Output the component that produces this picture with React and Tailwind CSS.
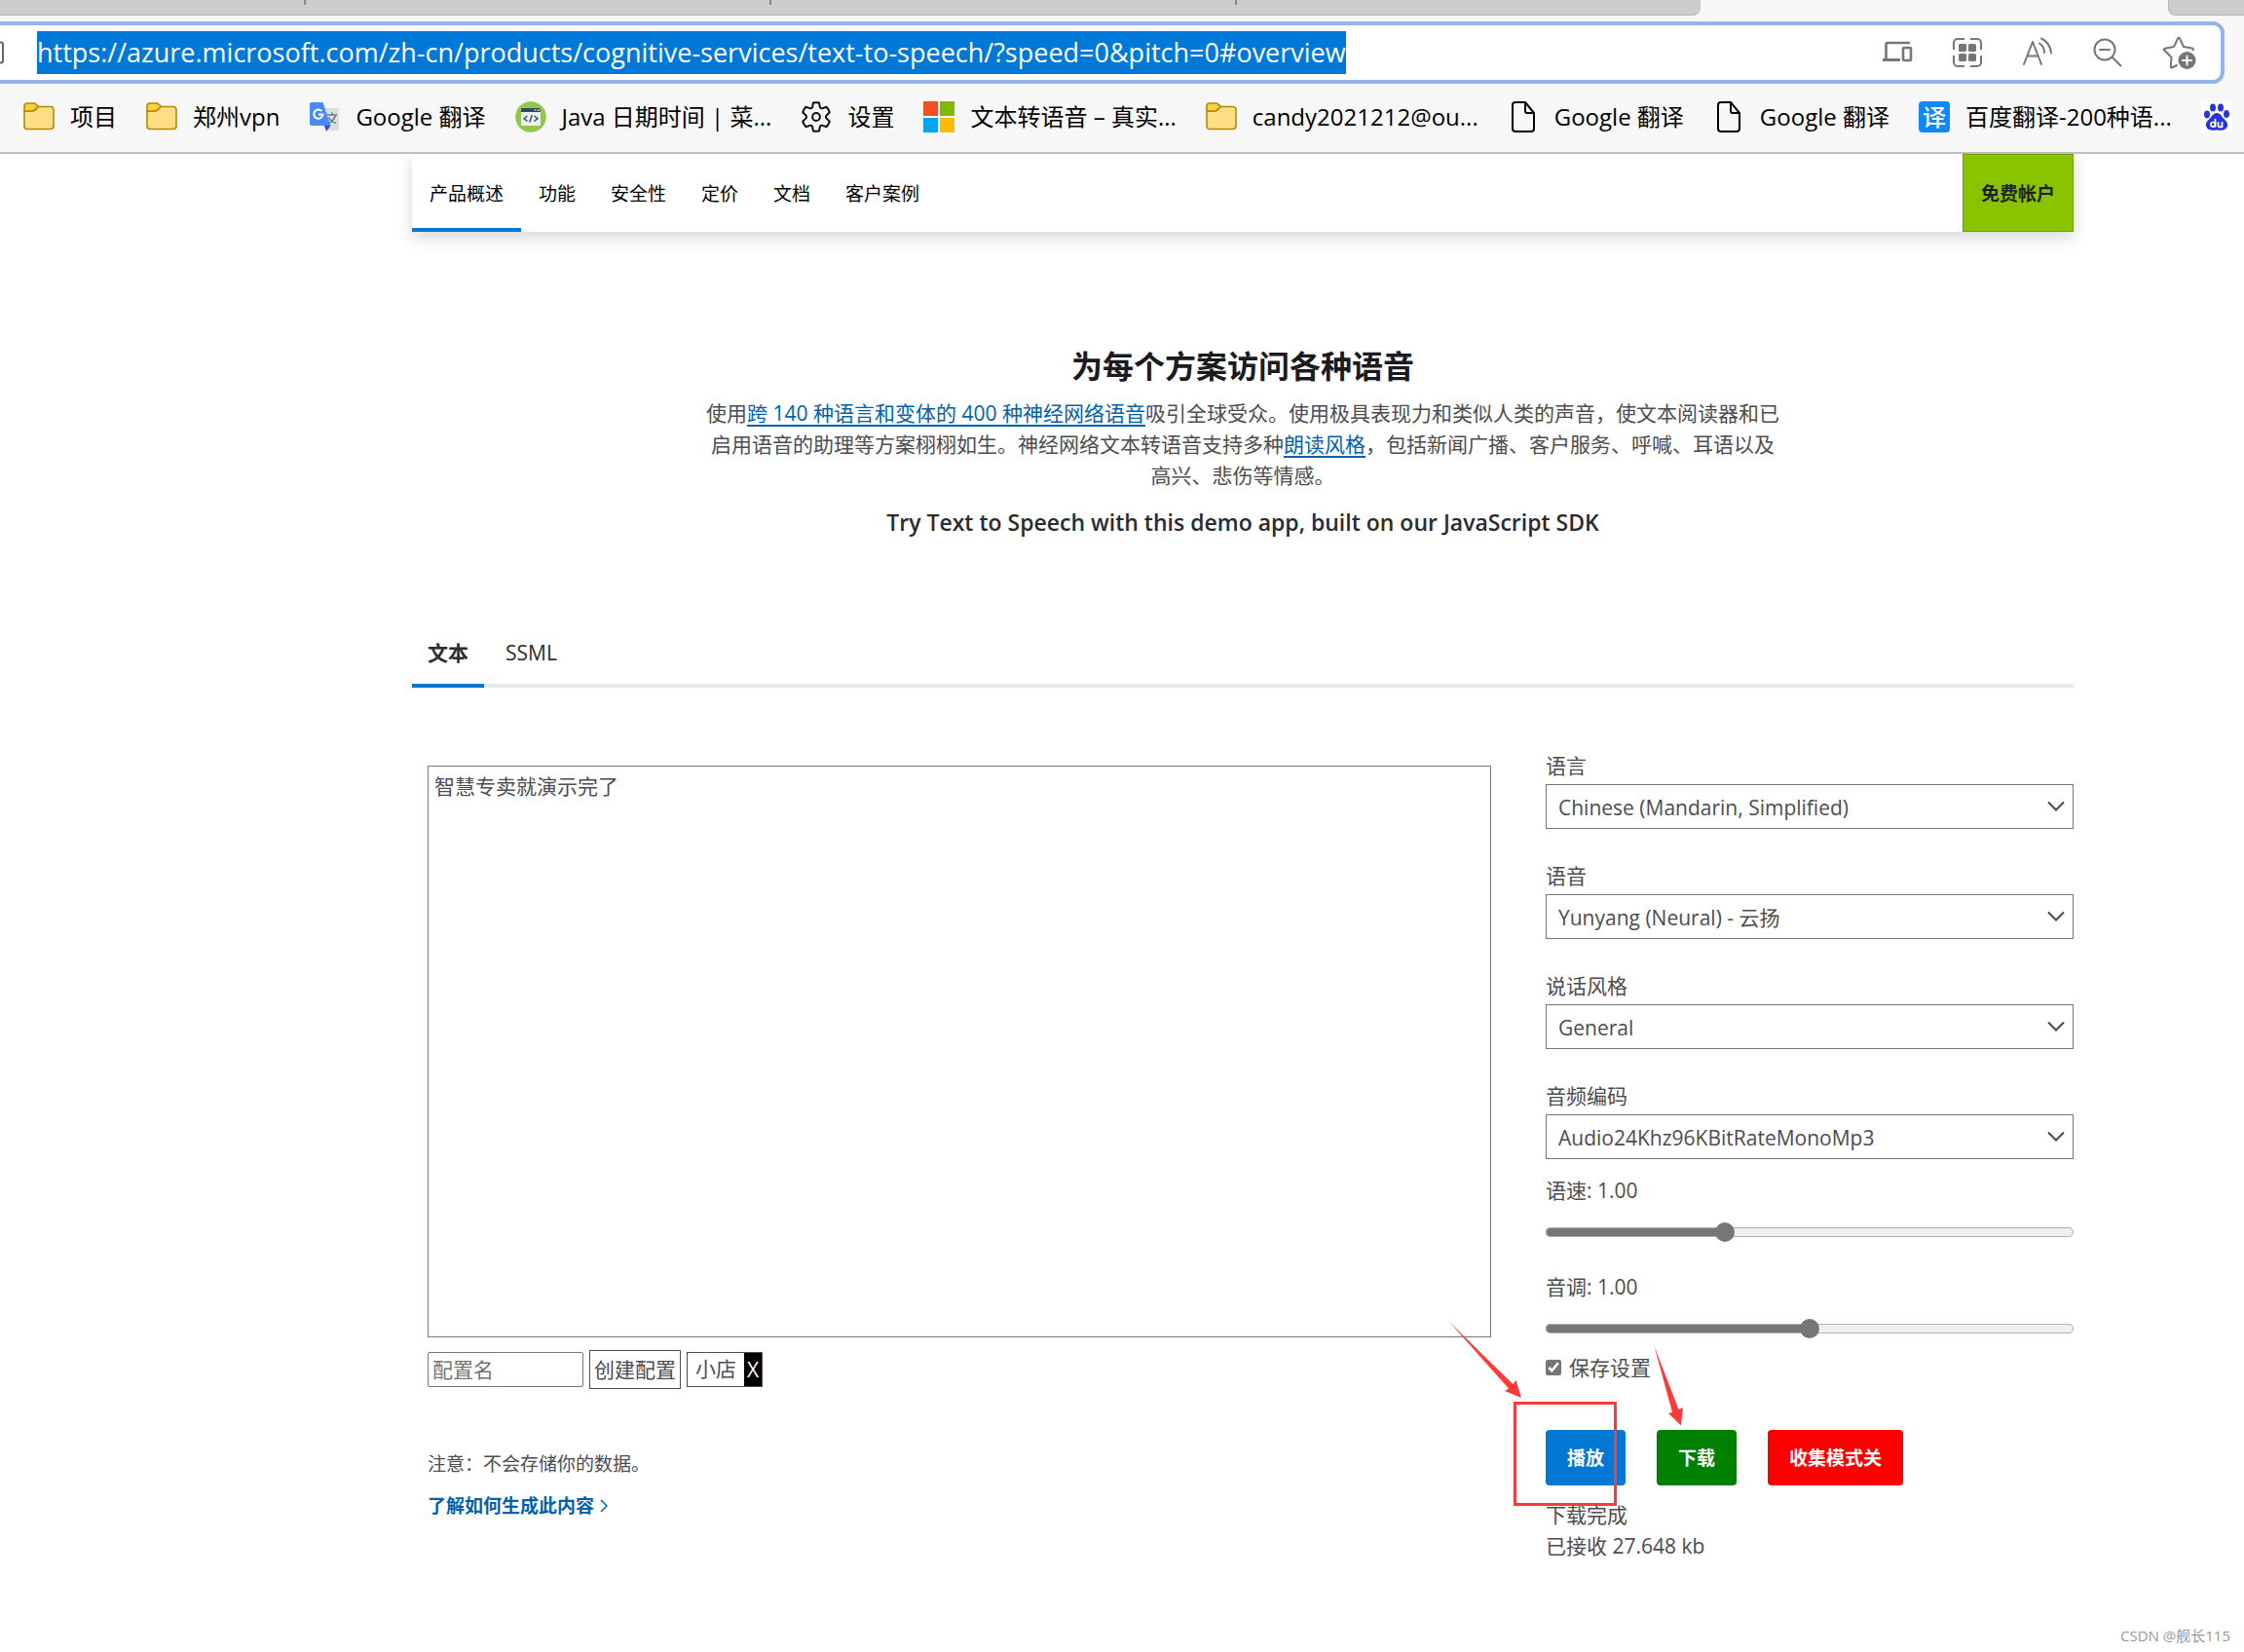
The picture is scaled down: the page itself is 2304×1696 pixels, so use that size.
import React, { useState } from "react";

const FONT = "font-['Open_Sans','Noto_Sans_CJK_SC',sans-serif]";

function FolderIcon() {
  return (
    <svg viewBox="0 0 32 32" className="size-8 shrink-0" stroke="#b58900" strokeWidth="1.6">
      <path d="M1 10V25.500a3 3 0 0 0 3 3h24a3 3 0 0 0 3-3V8.500a3 3 0 0 0-3-3H15L12 9 9 10z" fill="#ffdf85" />
      <path d="M1 10V5a3 3 0 0 1 3-3h7.500l3.800 3.200L12 8.500 10 10z" fill="#ffcf3d" />
    </svg>
  );
}

function TranslateIcon() {
  return (
    <svg viewBox="0 0 32 32" className="size-8 shrink-0">
      <path d="M12 7h17a2 2 0 0 1 2 2v19a2 2 0 0 1-2 2H18z" fill="#dedede" />
      <path d="M19 14h10M24 11.500v2.500M27.500 14c-1 4-4 7-6.500 8.500M20.500 16.500c1.500 3 4.500 5 7.500 6" fill="none" stroke="#607d8b" strokeWidth="1.500" />
      <path d="M16 25h6.500L18 31z" fill="#3a4cbf" />
      <path d="M3 1h11.500L22.500 25H3a2 2 0 0 1-2-2V3a2 2 0 0 1 2-2z" fill="#4a8af4" />
      <path d="M13.300 10.200A4.600 4.600 0 1 0 14.400 13.500H10" fill="none" stroke="#fff" strokeWidth="2" />
    </svg>
  );
}

function CodeIcon() {
  return (
    <svg viewBox="0 0 32 32" className="size-8 shrink-0">
      <circle cx="16" cy="16" r="15.800" fill="#91c84c" />
      <rect x="6" y="7" width="20" height="18" rx="1" fill="#ecf0f1" />
      <path d="M6 11V8a1 1 0 0 1 1-1h18a1 1 0 0 1 1 1v3z" fill="#324a5e" />
      <circle cx="20.500" cy="9" r="1" fill="#4cdbc4" />
      <circle cx="22.500" cy="9" r="1" fill="#f1543f" />
      <circle cx="24.500" cy="9" r="1" fill="#ffd05b" />
      <path d="M12.500 15l-3.500 2.700 3.500 2.700M19.500 15l3.500 2.700-3.500 2.700M17.300 14l-2.600 7.500" fill="none" stroke="#324a5e" strokeWidth="1.400" />
    </svg>
  );
}

function GearIcon() {
  return (
    <svg viewBox="0 0 32 32" className="size-8 shrink-0" fill="none" stroke="#111" strokeWidth="2" strokeLinejoin="round">
      <path d="M13 1.500a15 15 0 0 1 6 0l.800 4a2 2 0 0 0 2.900 1.600l3.800-1.400a15 15 0 0 1 3.300 5.600l-3 2.900a2.200 2.200 0 0 0 0 3.500l3 2.900a15 15 0 0 1-3.300 5.700l-3.800-1.400a2 2 0 0 0-2.900 1.600l-.800 4a15 15 0 0 1-6 0l-.800-4a2 2 0 0 0-2.900-1.600l-3.800 1.400a15 15 0 0 1-3.300-5.700l3-2.900a2.200 2.200 0 0 0 0-3.500l-3-2.900a15 15 0 0 1 3.300-5.600l3.800 1.400a2 2 0 0 0 2.900-1.600z" />
      <circle cx="16" cy="16" r="3.900" />
    </svg>
  );
}

function MicrosoftIcon() {
  return (
    <svg viewBox="0 0 32 32" className="size-8 shrink-0">
      <path d="M0 0h15v15H0z" fill="#f25022" />
      <path d="M17 0h15v15H17z" fill="#7fba00" />
      <path d="M0 17h15v15H0z" fill="#00a4ef" />
      <path d="M17 17h15v15H17z" fill="#ffb900" />
    </svg>
  );
}

function PageIcon() {
  return (
    <svg viewBox="0 0 32 32" className="size-8 shrink-0" fill="none" stroke="#000" strokeWidth="2" strokeLinejoin="round">
      <path d="M8 1h10l9 11v16a3 3 0 0 1-3 3H8a3 3 0 0 1-3-3V4a3 3 0 0 1 3-3z" />
      <path d="M18 1v9a2 2 0 0 0 2 2h7" />
    </svg>
  );
}

function YiIcon() {
  return (
    <span aria-hidden="true" className="flex size-8 shrink-0 items-center justify-center rounded bg-[#1088f8] text-[24px] leading-none font-medium text-white">
      译
    </span>
  );
}

function BaiduIcon() {
  return (
    <svg viewBox="0 0 32 32" className="size-8 shrink-0">
      <rect width="32" height="32" rx="4" fill="#fff" />
      <g fill="#2932e1">
        <ellipse cx="12" cy="6.500" rx="3" ry="4" />
        <ellipse cx="20" cy="6.500" rx="3" ry="4" />
        <ellipse cx="6" cy="13.500" rx="3" ry="3.900" />
        <ellipse cx="26" cy="13" rx="3" ry="3.900" />
        <path d="M16 12c4 0 5 4 8 6.500 2.500 2.500 4 5 2.500 8-1.500 3.500-5 3.500-10.500 3-5.500.500-9 .500-10.500-3-1.500-3 0-5.500 2.500-8C11 16 12 12 16 12z" />
      </g>
      <path d="M14.500 18v8.500M21.500 21v3.500a2 2 0 0 1-4 0V21M21.500 21v6" fill="none" stroke="#fff" strokeWidth="1.700" />
      <circle cx="12.200" cy="23.800" r="2.300" fill="none" stroke="#fff" strokeWidth="1.700" />
    </svg>
  );
}

const bookmarks = [
  { icon: FolderIcon, label: "项目" },
  { icon: FolderIcon, label: "郑州vpn" },
  { icon: TranslateIcon, label: "Google 翻译" },
  { icon: CodeIcon, label: "Java 日期时间 | 菜..." },
  { icon: GearIcon, label: "设置" },
  { icon: MicrosoftIcon, label: "文本转语音 – 真实..." },
  { icon: FolderIcon, label: "candy2021212@ou..." },
  { icon: PageIcon, label: "Google 翻译" },
  { icon: PageIcon, label: "Google 翻译" },
  { icon: YiIcon, label: "百度翻译-200种语..." },
  { icon: BaiduIcon, label: "" },
];

function AddressIcons() {
  return (
    <div className="flex items-center gap-10 text-[#767676]">
      <button aria-label="发送到设备">
        <svg viewBox="0 0 32 32" className="size-8" fill="none" stroke="currentColor" strokeWidth="2">
          <path d="M4.500 22.500V7.500a1.500 1.500 0 0 1 1.500-1.500h23" strokeWidth="2.600" />
          <path d="M1 23.500h18" strokeWidth="3" />
          <rect x="22" y="11" width="8" height="13" rx="1" strokeWidth="2.600" />
        </svg>
      </button>
      <button aria-label="应用">
        <svg viewBox="0 0 32 32" className="size-8" fill="none" stroke="currentColor" strokeWidth="2">
          <path d="M2 13V6a4 4 0 0 1 4-4h7M19 2h7a4 4 0 0 1 4 4v7M30 19v7a4 4 0 0 1-4 4h-7M13 30H6a4 4 0 0 1-4-4v-7" />
          <g fill="currentColor" stroke="none">
            <rect x="7" y="7" width="8" height="8" rx="1.500" />
            <rect x="17" y="7" width="8" height="8" rx="1.500" />
            <rect x="7" y="17" width="8" height="8" rx="1.500" />
            <rect x="17" y="17" width="8" height="8" rx="1.500" />
          </g>
        </svg>
      </button>
      <button aria-label="大声朗读">
        <svg viewBox="0 0 32 32" className="size-8" fill="none" stroke="currentColor" strokeWidth="2" strokeLinecap="round" strokeLinejoin="round">
          <path d="M2 28L11 5l9 23M5.500 19.500h11" />
          <path d="M18 6.500c3 2 5 5.500 5 9.500M20 1.500c6 3 9.500 8.500 10 15" />
        </svg>
      </button>
      <button aria-label="缩小">
        <svg viewBox="0 0 32 32" className="size-8" fill="none" stroke="currentColor" strokeWidth="2" strokeLinecap="round">
          <circle cx="13" cy="13" r="10.500" />
          <path d="M8 13h10M20.500 20.500L29.500 29.500" />
        </svg>
      </button>
      <button aria-label="添加到收藏夹">
        <svg viewBox="0 0 36 36" className="size-9" fill="none" stroke="currentColor" strokeWidth="2" strokeLinejoin="round" strokeLinecap="round">
          <path d="M15 31l-5 2.500c-.800.200-1.300-.300-1.200-1L9.500 23 2 15.300c-.500-.700-.200-1.500.700-1.600L12 12l4.200-8.700c.400-.700 1.300-.700 1.700 0L22 12l9 1.500c1 .200 1.200 1 .500 1.700" />
          <circle cx="25.500" cy="26" r="9" fill="currentColor" stroke="none" />
          <path d="M25.500 21.500v9M21 26h9" stroke="#fff" />
        </svg>
      </button>
    </div>
  );
}

function BrowserChrome() {
  return (
    <header className="border-b-2 border-[#bfbfbf] bg-[#f7f7f7]">
      <div className="flex h-4 justify-between">
        <div className="flex w-[1746px] rounded-br-lg border-b border-[#b5b5b5] bg-[#cdcdcd]">
          <span className="h-[5px] w-[314px] border-r-2 border-[#8a8a8a]" />
          <span className="h-[5px] w-[478px] border-r-2 border-[#8a8a8a]" />
          <span className="h-[5px] w-[478px] border-r-2 border-[#8a8a8a]" />
        </div>
        <div className="w-[78px] rounded-bl-lg border-b border-l border-[#b5b5b5] bg-[#cdcdcd]" />
      </div>
      <div className="mt-1.5 mr-5 flex h-16 items-center justify-between rounded-r-xl border-4 border-l-0 border-[#92b4ea] bg-white pr-6">
        <div className="flex items-center">
          <svg viewBox="0 0 4 24" className="mr-[34px] h-6 w-1" fill="none" stroke="#666" strokeWidth="2">
            <path d="M0 1.500h1a2 2 0 0 1 2 2v17a2 2 0 0 1-2 2H0" />
          </svg>
          <input
            aria-label="地址"
            readOnly
            value="https://azure.microsoft.com/zh-cn/products/cognitive-services/text-to-speech/?speed=0&pitch=0#overview"
            className="h-11 field-sizing-content bg-[#0078d7] pb-0.5 text-[27px] text-white outline-none"
          />
        </div>
        <AddressIcons />
      </div>
      <nav aria-label="收藏夹" className="flex h-[70px] items-center gap-[30px] overflow-hidden pb-0.5 pl-6 text-[24px] leading-8 whitespace-nowrap text-black">
        {bookmarks.map(({ icon: Icon, label }, i) => (
          <a key={i} href="#bookmark" aria-label={label || "百度"} className="flex items-center gap-4">
            <Icon />
            {label && <span>{label}</span>}
          </a>
        ))}
      </nav>
    </header>
  );
}

function ProductNav() {
  const items = ["产品概述", "功能", "安全性", "定价", "文档", "客户案例"];
  return (
    <nav aria-label="产品" className="flex h-20 justify-between bg-white shadow-[0_6px_16px_rgba(0,0,0,0.16)] [clip-path:inset(0_-24px_-28px_-24px)]">
      <div className="flex">
        {items.map((t, i) => (
          <a
            key={t}
            href="#overview"
            className={
              "flex items-center border-y-4 border-t-transparent px-[18px] pt-0.5 text-[19px] text-black " +
              (i === 0 ? "border-b-[#0078d4]" : "border-b-transparent")
            }
          >
            {t}
          </a>
        ))}
      </div>
      <a href="#free" className="flex items-center border border-[#6fa000] bg-[#8ac400] px-[18px] pt-0.5 text-[19px] font-bold text-[#1f1f23]">
        免费帐户
      </a>
    </nav>
  );
}

function SelectField({ id, label, value }) {
  return (
    <div>
      <label htmlFor={id} className="block pb-[3px]">{label}</label>
      <div className="relative">
        <select id={id} className="block h-[46px] w-full appearance-none rounded-none border border-[#75757a] bg-white pt-0.5 pl-3 outline-none">
          <option>{value}</option>
        </select>
        <svg viewBox="0 0 18 12" className="pointer-events-none absolute top-[17px] right-[9px] h-3 w-[18px]" fill="none" stroke="#4a4a4e" strokeWidth="2">
          <path d="M1 1.500l8 8 8-8" />
        </svg>
      </div>
    </div>
  );
}

function SliderField({ id, label, max, initial }) {
  const [value, setValue] = useState(initial);
  const pct = (value / max) * 100;
  return (
    <div>
      <label htmlFor={id} className="block">{label}: 1.00</label>
      <input
        id={id}
        type="range"
        min="0"
        max={max}
        step="any"
        value={value}
        onChange={(e) => setValue(Number(e.target.value))}
        style={{ "--fill": `linear-gradient(to right, #767676 ${pct}%, #efefef ${pct}%)` }}
        className="mt-[17px] block h-5 w-full appearance-none bg-transparent [&::-webkit-slider-runnable-track]:h-2.5 [&::-webkit-slider-runnable-track]:rounded-full [&::-webkit-slider-runnable-track]:bg-(image:--fill) [&::-webkit-slider-runnable-track]:shadow-[inset_0_0_0_1px_#b2b2b2] [&::-webkit-slider-thumb]:-mt-[5px] [&::-webkit-slider-thumb]:size-5 [&::-webkit-slider-thumb]:appearance-none [&::-webkit-slider-thumb]:rounded-full [&::-webkit-slider-thumb]:bg-[#767676]"
      />
    </div>
  );
}

function ActionButtons() {
  const base = "h-[57px] rounded px-[22px] text-[19px] font-bold text-white ";
  return (
    <div className="relative mt-12 flex gap-8">
      <button className={base + "bg-[#0078d4]"}>播放</button>
      <button className={base + "bg-[#008000]"}>下载</button>
      <button className={base + "bg-[#ff0000]"}>收集模式关</button>
      <svg viewBox="0 0 260 200" className="pointer-events-none absolute -top-[118px] -left-[107px] h-[200px] w-[260px]" fill="#fb3b3a">
        <path d="M8 7L73.500 71l3-4L82 85l-17-7 4-2.500z" />
        <path d="M218.500 32l25 65 4.500-2-2 18.500L233 101l4-1z" />
        <path d="M75.500 90.500h103v104h-103z" fill="none" stroke="#fb3b3a" strokeWidth="3" />
      </svg>
    </div>
  );
}

export default function App() {
  return (
    <div className={"min-h-screen bg-white text-[21px] leading-8 text-[#4c4c51] " + FONT}>
      <BrowserChrome />
      <main className="pr-[175px] pl-[423px]">
        <ProductNav />

        <section className="mx-auto mt-[114px] w-[1120px] text-center">
          <h2 className="text-[32px] leading-12 font-bold text-[#1b1b1f]">为每个方案访问各种语音</h2>
          <p className="mt-2">
            使用
            <a href="#voices" className="text-[#0062ad] underline underline-offset-4">跨 140 种语言和变体的 400 种神经网络语音</a>
            吸引全球受众。使用极具表现力和类似人类的声音，使文本阅读器和已
            <br />
            启用语音的助理等方案栩栩如生。神经网络文本转语音支持多种
            <a href="#styles" className="text-[#0062ad] underline underline-offset-4">朗读风格</a>
            ，包括新闻广播、客户服务、呼喊、耳语以及
            <br />
            高兴、悲伤等情感。
          </p>
          <h3 className="mt-4 text-[23px] font-semibold text-[#2b2b30]">
            Try Text to Speech with this demo app, built on our JavaScript SDK
          </h3>
        </section>

        <div role="tablist" className="mt-[78px] flex h-[76px] border-b-4 border-[#e8e9ea] text-[#2b2b30]">
          <button role="tab" aria-selected="true" className="-mb-1 border-b-4 border-[#0078d4] px-4 pt-2 font-bold">文本</button>
          <button role="tab" aria-selected="false" className="px-[22px] pt-2">SSML</button>
        </div>

        <div className="mt-16 flex gap-14">
          <div className="min-w-0 flex-1 pt-4 pl-4">
            <textarea
              aria-label="文本"
              defaultValue="智慧专卖就演示完了"
              className="block h-[587px] w-full resize-none border border-[#75757a] px-1.5 py-1 outline-none"
            />
            <div className="mt-[13px] flex items-center gap-1.5">
              <input aria-label="配置名" placeholder="配置名" className="h-9 w-40 rounded-xs border border-[#767676] px-1 placeholder:text-[#757575]" />
              <button className="h-10 border border-[#4c4c51] px-1">创建配置</button>
              <span className="flex h-9 border border-[#4c4c51]">
                <span className="px-2">小店</span>
                <button aria-label="删除 小店" className="w-[18px] bg-black text-white">X</button>
              </span>
            </div>
            <p className="mt-[61px] text-[19px]">注意：不会存储你的数据。</p>
            <a href="#learn" className="mt-[11px] flex w-fit items-center gap-1.5 text-[19px] font-bold text-[#0062ad]">
              了解如何生成此内容
              <svg viewBox="0 0 8 14" className="h-3.5 w-2" fill="none" stroke="currentColor" strokeWidth="1.500">
                <path d="M1 1l6 6-6 6" />
              </svg>
            </a>
          </div>

          <div className="w-[542px] shrink-0">
            <div className="flex flex-col gap-8">
              <SelectField id="lang" label="语言" value="Chinese (Mandarin, Simplified)" />
              <SelectField id="voice" label="语音" value="Yunyang (Neural) - 云扬" />
              <SelectField id="style" label="说话风格" value="General" />
              <SelectField id="codec" label="音频编码" value="Audio24Khz96KBitRateMonoMp3" />
            </div>
            <div className="mt-4 flex flex-col gap-[30px]">
              <SliderField id="speed" label="语速" max={3} initial={1} />
              <SliderField id="pitch" label="音调" max={2} initial={1} />
            </div>
            <label className="mt-3.5 flex w-fit items-center gap-2">
              <input type="checkbox" defaultChecked className="size-4 accent-[#767676]" />
              保存设置
            </label>
            <ActionButtons />
            <p className="mt-3.5">下载完成</p>
            <p>已接收 27.648 kb</p>
          </div>
        </div>
      </main>
      <footer className="mt-[66px] pr-3.5 text-right text-[15px] leading-5 text-[#999]">CSDN @舰长115</footer>
    </div>
  );
}
